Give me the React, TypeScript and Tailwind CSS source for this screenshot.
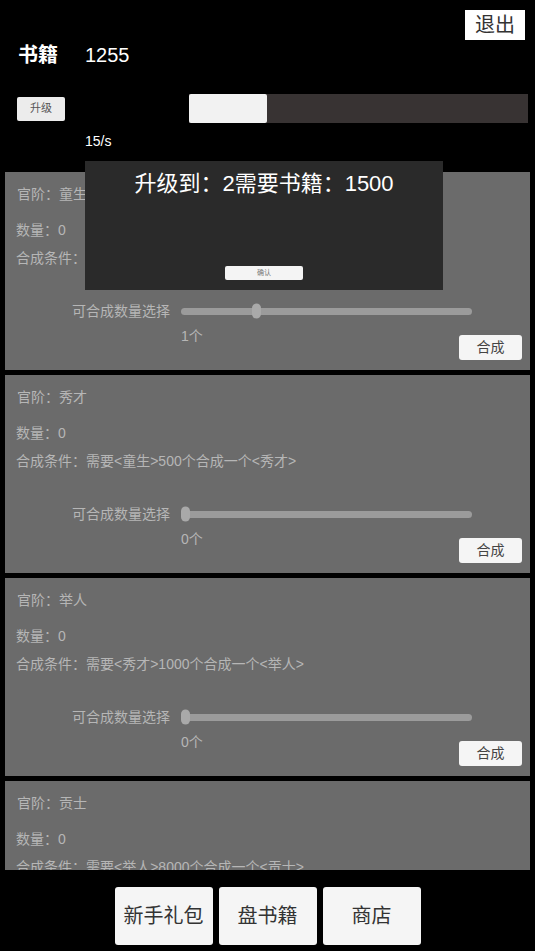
import React from "react";

type Rank = {
    name: string;
    count: number;
    rule: string;
    value: number;
    max: number;
};

const ranks: Rank[] = [
    { name: "童生", count: 0, rule: "需要书籍1000个合成一个<童生>", value: 1, max: 4 },
    { name: "秀才", count: 0, rule: "需要<童生>500个合成一个<秀才>", value: 0, max: 1 },
    { name: "举人", count: 0, rule: "需要<秀才>1000个合成一个<举人>", value: 0, max: 1 },
    { name: "贡士", count: 0, rule: "需要<举人>8000个合成一个<贡士>", value: 0, max: 1 },
];

const font = { fontFamily: '"Liberation Sans", "Noto Sans CJK SC", sans-serif' };

function RankCard({ rank }: { rank: Rank }) {
    const pct = rank.max > 0 ? rank.value / rank.max : 0;
    return (
        <div className="h-[198px] shrink-0 bg-[#6b6b6b] text-[14px] text-[#b6b6b6] flex flex-col">
            <div className="pt-[12px] pl-[12px] leading-[20px]">官阶：{rank.name}</div>
            <div className="mt-[16px] pl-[11px] leading-[20px]">数量：{rank.count}</div>
            <div className="mt-[8px] pl-[11px] leading-[20px] whitespace-nowrap">合成条件：{rank.rule}</div>
            <div className="mt-[33px] flex items-center h-[20px]">
                <span className="w-[165px] text-right leading-[20px]">可合成数量选择</span>
                <div className="ml-[11px] w-[291px] h-[7px] rounded-full bg-[#9b9b9b] relative">
                    <div
                        className="absolute top-1/2 -translate-y-1/2 w-[9px] h-[15px] rounded-full bg-[#a9a9a9]"
                        style={{ left: `${pct * 282}px` }}
                    />
                </div>
            </div>
            <div className="mt-[5px] flex justify-between items-start">
                <span className="pl-[176px] leading-[20px]">{rank.value}个</span>
                <button className="mt-[9px] mr-[8px] w-[63px] h-[25px] rounded-[3px] bg-[#f5f5f5] text-[#444] text-[14px]">
                    合成
                </button>
            </div>
        </div>
    );
}

export default function App() {
    return (
        <main className="relative w-[535px] h-[951px] bg-black flex flex-col overflow-hidden" style={font}>
            <div className="pt-[10px] pr-[10px] flex justify-end">
                <button className="w-[60px] h-[30px] bg-white text-[#333] text-[20px] leading-[30px]">退出</button>
            </div>
            <div className="h-[30px] flex items-center text-white text-[20px]">
                <span className="pl-[18px] w-[85px] font-bold">书籍</span>
                <span>1255</span>
            </div>
            <div className="mt-[24px] h-[29px] flex items-center">
                <button className="ml-[17px] w-[48px] h-[24px] rounded-[2px] bg-[#ececec] text-[#555] text-[11px]">
                    升级
                </button>
                <div className="ml-[124px] w-[339px] h-[29px] bg-[#383333] flex">
                    <div className="w-[78px] h-full bg-[#f2f2f2] rounded-[2px]" />
                </div>
            </div>
            <div className="mt-[8px] h-[20px] pl-[85px] text-white text-[14px] leading-[20px]">15/s</div>

            <div className="mt-[21px] h-[698px] overflow-hidden px-[5px] flex flex-col gap-[5px]">
                {ranks.map((r) => (
                    <RankCard key={r.name} rank={r} />
                ))}
            </div>

            <div className="flex-1 flex justify-center gap-[6px] pt-[17px]">
                {["新手礼包", "盘书籍", "商店"].map((t) => (
                    <button key={t} className="w-[98px] h-[58px] rounded-[3px] bg-[#f5f5f5] text-[#333] text-[20px]">
                        {t}
                    </button>
                ))}
            </div>

            {/* upgrade dialog */}
            <div className="absolute left-[85px] top-[161px] w-[358px] h-[129px] bg-[#2a2a2a] flex flex-col items-center">
                <div className="mt-[8px] text-white text-[22px] leading-[30px]">升级到：2需要书籍：1500</div>
                <button className="mt-[67px] w-[78px] h-[14px] rounded-[2px] bg-[#f4f4f4] text-[#777] text-[7px] leading-[14px]">
                    确认
                </button>
            </div>
        </main>
    );
}
